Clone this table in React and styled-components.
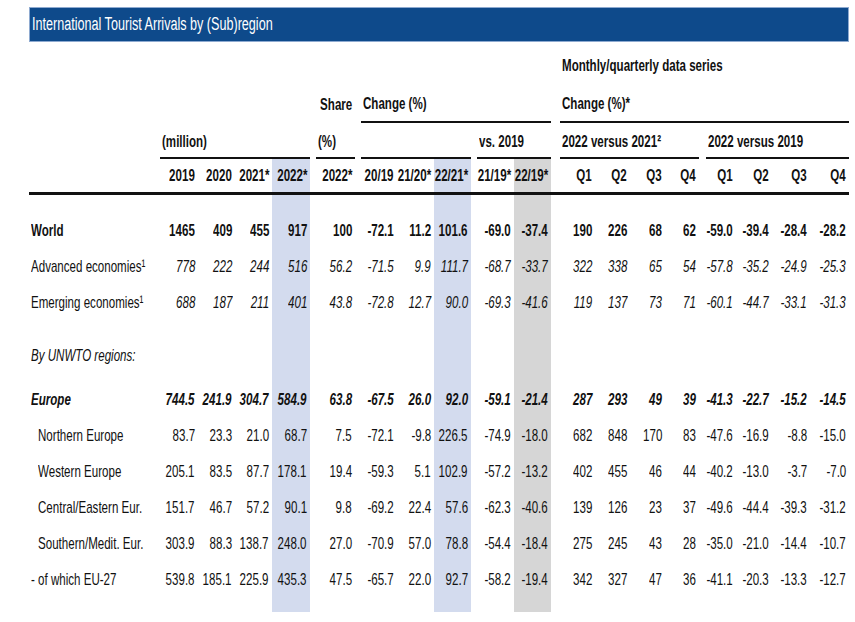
import React from "react";
import styled, { createGlobalStyle, css } from "styled-components";

const GlobalStyle = createGlobalStyle`
  html, body {
    margin: 0;
    padding: 0;
    background: #ffffff;
  }
  body {
    font-family: "Liberation Sans", Arial, sans-serif;
    color: #111111;
  }
`;

// column widths of the sheet: label, 4 volumes, gap, share, gap, 3 changes,
// gap, 2 vs 2019, gap, 4 quarters, gap, 4 quarters
const COLUMNS =
  "131px 38px 37px 37px 38px 6px 39px 6px 36px 37px 37px 6px 37px 37px 9px 35px 35px 35px 34px 7px 30px 36px 38px 39px";

const VALUE_COLS = [2, 3, 4, 5, 7, 9, 10, 11, 13, 14, 16, 17, 18, 19, 21, 22, 23, 24];
const BLUE_COLS = [5, 11];
const GREY_COLS = [14];

// the sheet is set in a narrow face; no condensed face is installed, so squeeze
const NARROW = 0.68;

const Page = styled.div`
  padding: 7px 0 0 29px;
  width: 820px;
  font-size: 17px;
`;

const Txt = styled.span`
  display: inline-block;
  white-space: nowrap;
  transform: scaleX(${(p) => p.$scale || NARROW});
  transform-origin: ${(p) => (p.$right ? "right" : "left")} center;
`;

const TitleBar = styled.div`
  height: 33px;
  display: flex;
  align-items: center;
  padding-left: 2px;
  background: #0e4a8b;
  border: 1px solid #8eaad0;
  color: #ffffff;
  font-size: 18px;
  overflow: hidden;
`;

const Row = styled.div`
  display: grid;
  grid-template-columns: ${COLUMNS};
  height: ${(p) => p.$h}px;
`;

const highlight = css`
  ${(p) => p.$hl === "blue" && "background: #d3dbee;"}
  ${(p) => p.$hl === "grey" && "background: #d6d6d6;"}
`;

const HeadCell = styled.div`
  display: flex;
  align-items: center;
  justify-content: ${(p) => (p.$right ? "flex-end" : "flex-start")};
  padding: ${(p) => p.$pt || 0}px ${(p) => (p.$right ? 3 : 0)}px 0 ${(p) => (p.$right ? 0 : 2)}px;
  font-weight: bold;
  min-width: 0;
  border-bottom: ${(p) => (p.$rule ? "2px solid #111" : "none")};
  ${highlight}
`;

const ColHead = styled.div`
  display: flex;
  align-items: center;
  justify-content: flex-end;
  padding: 1px 3px 0 0;
  font-weight: bold;
  min-width: 0;
  border-bottom: 3px solid #111;
  ${highlight}
`;

const Cell = styled.div`
  display: flex;
  align-items: center;
  justify-content: flex-end;
  padding-right: 3px;
  min-width: 0;
  font-weight: ${(p) => (p.$bold ? "bold" : "normal")};
  font-style: ${(p) => (p.$italic ? "italic" : "normal")};
  ${highlight}
`;

const Label = styled.div`
  display: flex;
  align-items: center;
  padding-left: ${(p) => (p.$indent ? 9 : 2)}px;
  min-width: 0;
  font-weight: ${(p) => (p.$bold ? "bold" : "normal")};
  font-style: ${(p) => (p.$italic ? "italic" : "normal")};
`;

const hlFor = (col) =>
  BLUE_COLS.includes(col) ? "blue" : GREY_COLS.includes(col) ? "grey" : undefined;

const HEADERS = [
  "2019", "2020", "2021*", "2022*", "2022*", "20/19", "21/20*", "22/21*", "21/19*",
  "22/19*", "Q1", "Q2", "Q3", "Q4", "Q1", "Q2", "Q3", "Q4",
];

const ROWS = [
  { spacer: 18 },
  {
    label: "World", bold: true,
    values: ["1465", "409", "455", "917", "100", "-72.1", "11.2", "101.6", "-69.0", "-37.4", "190", "226", "68", "62", "-59.0", "-39.4", "-28.4", "-28.2"],
  },
  {
    label: "Advanced economies¹", italic: true, plainLabel: true,
    values: ["778", "222", "244", "516", "56.2", "-71.5", "9.9", "111.7", "-68.7", "-33.7", "322", "338", "65", "54", "-57.8", "-35.2", "-24.9", "-25.3"],
  },
  {
    label: "Emerging economies¹", italic: true, plainLabel: true,
    values: ["688", "187", "211", "401", "43.8", "-72.8", "12.7", "90.0", "-69.3", "-41.6", "119", "137", "73", "71", "-60.1", "-44.7", "-33.1", "-31.3"],
  },
  { spacer: 17 },
  { label: "By UNWTO regions:", italic: true, values: [] },
  { spacer: 8 },
  {
    label: "Europe", bold: true, italic: true,
    values: ["744.5", "241.9", "304.7", "584.9", "63.8", "-67.5", "26.0", "92.0", "-59.1", "-21.4", "287", "293", "49", "39", "-41.3", "-22.7", "-15.2", "-14.5"],
  },
  {
    label: "Northern Europe", indent: true,
    values: ["83.7", "23.3", "21.0", "68.7", "7.5", "-72.1", "-9.8", "226.5", "-74.9", "-18.0", "682", "848", "170", "83", "-47.6", "-16.9", "-8.8", "-15.0"],
  },
  {
    label: "Western Europe", indent: true,
    values: ["205.1", "83.5", "87.7", "178.1", "19.4", "-59.3", "5.1", "102.9", "-57.2", "-13.2", "402", "455", "46", "44", "-40.2", "-13.0", "-3.7", "-7.0"],
  },
  {
    label: "Central/Eastern Eur.", indent: true,
    values: ["151.7", "46.7", "57.2", "90.1", "9.8", "-69.2", "22.4", "57.6", "-62.3", "-40.6", "139", "126", "23", "37", "-49.6", "-44.4", "-39.3", "-31.2"],
  },
  {
    label: "Southern/Medit. Eur.", indent: true,
    values: ["303.9", "88.3", "138.7", "248.0", "27.0", "-70.9", "57.0", "78.8", "-54.4", "-18.4", "275", "245", "43", "28", "-35.0", "-21.0", "-14.4", "-10.7"],
  },
  {
    label: "- of which EU-27",
    values: ["539.8", "185.1", "225.9", "435.3", "47.5", "-65.7", "22.0", "92.7", "-58.2", "-19.4", "342", "327", "47", "36", "-41.1", "-20.3", "-13.3", "-12.7"],
  },
  { spacer: 14 },
];

function DataRow({ row }) {
  const cells = [];
  for (let col = 2; col <= 24; col++) {
    const idx = VALUE_COLS.indexOf(col);
    const value = idx >= 0 && row.values ? row.values[idx] : null;
    cells.push(
      <Cell key={col} $hl={hlFor(col)} $bold={row.bold} $italic={row.italic}>
        {value && <Txt $right>{value}</Txt>}
      </Cell>
    );
  }
  return (
    <Row $h={row.spacer || 36}>
      <Label
        $indent={row.indent}
        $bold={row.bold}
        $italic={row.italic && !row.plainLabel}
      >
        {row.label && <Txt>{row.label}</Txt>}
      </Label>
      {cells}
    </Row>
  );
}

export default function App() {
  return (
    <>
      <GlobalStyle />
      <Page>
        <TitleBar>
          <Txt $scale={0.7}>International Tourist Arrivals by (Sub)region</Txt>
        </TitleBar>

        <Row $h={44}>
          <HeadCell $pt={4} style={{ gridColumn: "16 / 25" }}>
            <Txt>Monthly/quarterly data series</Txt>
          </HeadCell>
        </Row>

        <Row $h={37}>
          <HeadCell $right style={{ gridColumn: "7 / 8" }}>
            <Txt $right>Share</Txt>
          </HeadCell>
          <HeadCell $rule style={{ gridColumn: "9 / 15" }}>
            <Txt>Change (%)</Txt>
          </HeadCell>
          <HeadCell $rule style={{ gridColumn: "16 / 25" }}>
            <Txt>Change (%)*</Txt>
          </HeadCell>
        </Row>

        <Row $h={36}>
          <HeadCell $pt={3} $rule style={{ gridColumn: "2 / 6" }}>
            <Txt>(million)</Txt>
          </HeadCell>
          <HeadCell $pt={3} $rule style={{ gridColumn: "7 / 8" }}>
            <Txt>(%)</Txt>
          </HeadCell>
          <HeadCell $pt={3} $rule style={{ gridColumn: "9 / 12" }} />
          <HeadCell $pt={3} $rule style={{ gridColumn: "13 / 15" }}>
            <Txt>vs. 2019</Txt>
          </HeadCell>
          <HeadCell $pt={3} $rule style={{ gridColumn: "16 / 20" }}>
            <Txt>2022 versus 2021²</Txt>
          </HeadCell>
          <HeadCell $pt={3} $rule style={{ gridColumn: "21 / 25" }}>
            <Txt>2022 versus 2019</Txt>
          </HeadCell>
        </Row>

        <Row $h={36}>
          <ColHead />
          {Array.from({ length: 23 }, (_, i) => {
            const col = i + 2;
            const idx = VALUE_COLS.indexOf(col);
            return (
              <ColHead key={col} $hl={hlFor(col)}>
                {idx >= 0 && <Txt $right>{HEADERS[idx]}</Txt>}
              </ColHead>
            );
          })}
        </Row>

        {ROWS.map((row, i) => (
          <DataRow key={i} row={row} />
        ))}
      </Page>
    </>
  );
}
